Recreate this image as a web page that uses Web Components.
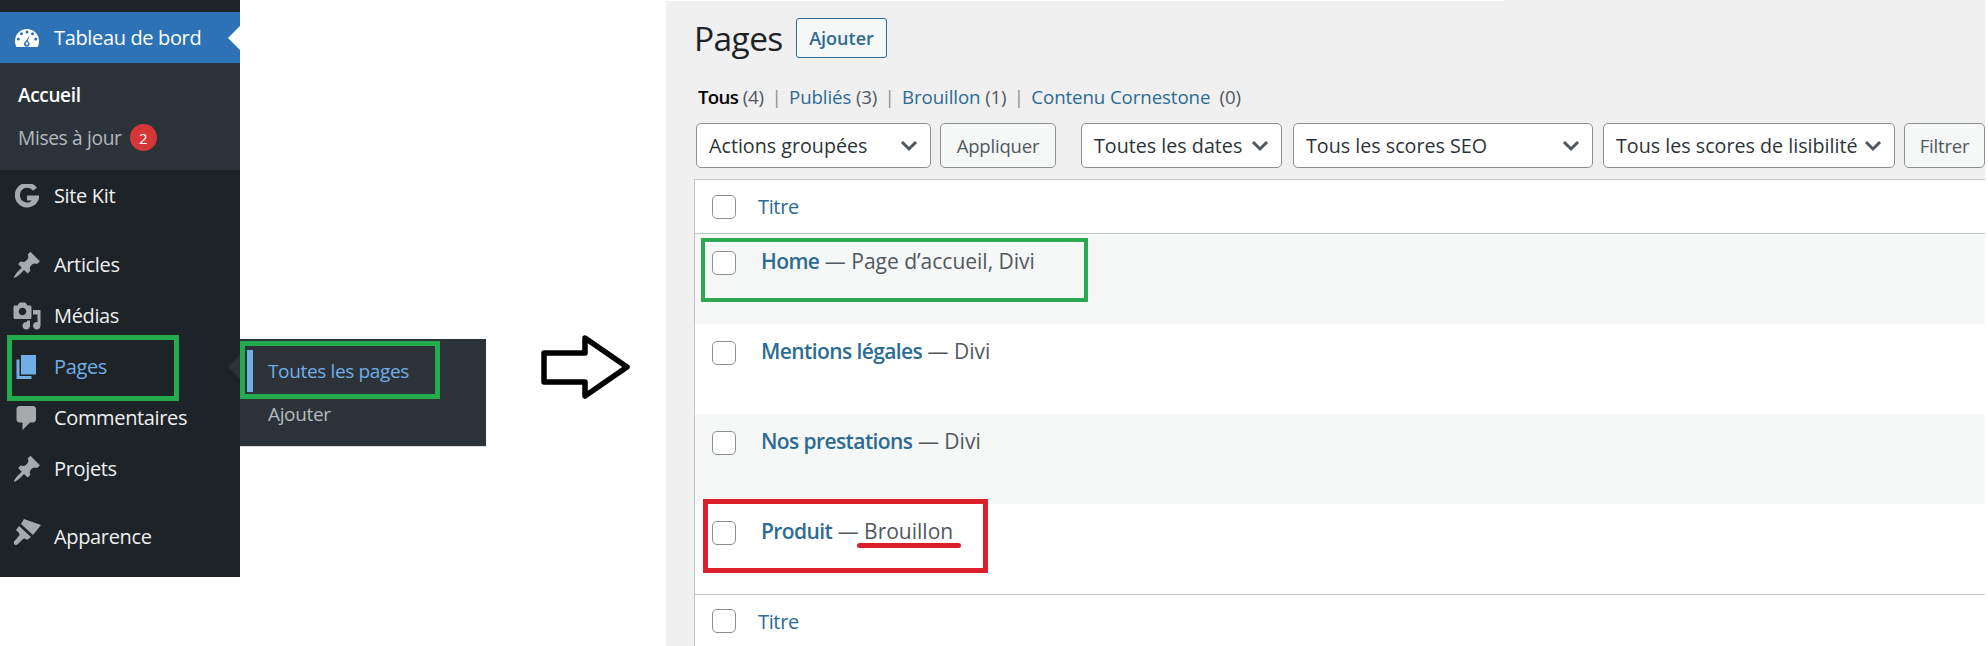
<!DOCTYPE html>
<html lang="fr">
<head>
<meta charset="utf-8">
<title>Pages</title>
<style>
  html, body { margin: 0; padding: 0; background: #fff; }
  body {
    width: 1988px; height: 646px; overflow: hidden; position: relative;
    font-family: "Open Sans", "Noto Sans", sans-serif; letter-spacing: -.35px;
  }
  #page { display: flex; align-items: flex-start; height: 646px; }
</style>
</head>
<body>
<div id="page">
  <admin-menu>
    <menu-item icon="gauge" state="current" label="Tableau de bord"></menu-item>
    <sub-menu>
      <sub-link strong>Accueil</sub-link>
      <sub-link badge="2">Mises à jour</sub-link>
    </sub-menu>
    <menu-item icon="google" label="Site Kit"></menu-item>
    <menu-item icon="pin" label="Articles" gap="18"></menu-item>
    <menu-item icon="media" label="Médias"></menu-item>
    <menu-item icon="page" state="open" label="Pages"></menu-item>
    <menu-item icon="comment" label="Commentaires"></menu-item>
    <menu-item icon="pin" label="Projets"></menu-item>
    <menu-item icon="brush" label="Apparence" gap="17"></menu-item>
    <fly-out slot="overlay">
      <fly-link active>Toutes les pages</fly-link>
      <fly-link>Ajouter</fly-link>
    </fly-out>
  </admin-menu>
  <big-arrow></big-arrow>
  <pages-screen>
    <page-row checked-state="alt" name="Home" meta="Page d’accueil, Divi"></page-row>
    <page-row name="Mentions légales" meta="Divi"></page-row>
    <page-row checked-state="alt" name="Nos prestations" meta="Divi"></page-row>
    <page-row name="Produit" meta="Brouillon"></page-row>
  </pages-screen>
</div>

<!-- les cadres dessines par dessus la capture -->
<mark-box x="7" y="335" w="172" h="66" color="#22ac4d" size="5"></mark-box>
<mark-box x="240" y="341" w="200" h="58" color="#22ac4d" size="5"></mark-box>
<mark-box x="701" y="238" w="387" h="64" color="#2ca853" size="4"></mark-box>
<mark-box x="703" y="499" w="285" h="74" color="#dd1f2c" size="5"></mark-box>
<mark-box x="857" y="543" w="104" h="5" color="#dd1f2c" fill></mark-box>

<script>
const icons = {
  gauge: `<svg width="24" height="18" viewBox="0 0 24 18"><path fill="currentColor" d="M12 0C5.4 0 0 5.4 0 12c0 2.2.5 4.2 1.5 6h21c1-1.8 1.5-3.8 1.500-6C24 5.400 18.600 0 12 0z"/><g fill="#2c72b4"><circle cx="12" cy="3" r="1.500"/><circle cx="6.500" cy="4.800" r="1.500"/><circle cx="17.500" cy="4.800" r="1.500"/><circle cx="3.300" cy="10" r="1.500"/><circle cx="20.700" cy="10" r="1.500"/><path d="M14.700 6l-2 6.200a2.800 2.800 0 1 1-2 .1z"/></g><circle cx="12" cy="14.600" r="1.300" fill="#fff"/></svg>`,
  google: `<svg width="24" height="24" viewBox="0 0 24 24"><path fill="none" stroke="currentColor" stroke-width="5" d="M20 5.300A9.800 9.800 0 1 0 21.500 14H12"/></svg>`,
  pin: `<svg width="30" height="30" viewBox="0 0 20 20"><path fill="currentColor" d="M10.440 3.020l1.820-1.820 6.360 6.350-1.830 1.820c-1.050-.68-2.480-.57-3.410.36l-.75.75c-.92.930-1.040 2.350-.35 3.410l-1.830 1.820-2.410-2.410-2.800 2.790c-.42.42-3.380 2.710-3.800 2.290s1.860-3.390 2.280-3.810l2.790-2.790L4.100 9.360l1.830-1.820c1.050.69 2.480.57 3.400-.36l.75-.75c.93-.92 1.050-2.350.36-3.410z"/></svg>`,
  media: `<svg width="30" height="30" viewBox="0 0 20 20"><path fill="currentColor" d="M13 11V4c0-.55-.45-1-1-1h-1.670L9 1H5L3.670 3H2c-.55 0-1 .45-1 1v7c0 .55.45 1 1 1h10c.55 0 1-.45 1-1zM7 4.500c1.380 0 2.500 1.120 2.500 2.500S8.380 9.500 7 9.500 4.500 8.380 4.500 7 5.620 4.500 7 4.500zM14 6h5v10.500c0 1.380-1.120 2.500-2.500 2.500S14 17.880 14 16.500s1.120-2.500 2.500-2.500c.17 0 .34.02.5.05V9h-3V6zm-4 8.050V13h2v3.500c0 1.380-1.120 2.500-2.500 2.500S7 17.880 7 16.500 8.120 14 9.500 14c.17 0 .34.02.5.05z"/></svg>`,
  page: `<svg width="30" height="30" viewBox="0 0 20 20"><path fill="currentColor" d="M6 15V2h10v13H6zm-1 1h8v2H3V5h2v11z"/></svg>`,
  comment: `<svg width="30" height="30" viewBox="0 0 20 20"><path fill="currentColor" d="M5 2h9c1.100 0 2 .9 2 2v7c0 1.100-.9 2-2 2h-2l-5 5v-5H5c-1.100 0-2-.9-2-2V4c0-1.100.9-2 2-2z"/></svg>`,
  brush: `<svg width="30" height="30" viewBox="0 6 30 30" style="overflow:visible"><path fill="currentColor" d="M12 3l17 6-8 10L9 8zM7 10l12 11-4 3c-2-2-3-2-5 0l-4 4c-2 2-5 1-4-2.500l4-4.500c2-2 2-3 0-5l-2-2z"/></svg>`
}

// petite aide pour ne pas repeter attachShadow partout
class Base extends HTMLElement {
  render(html) {
    if (!this.shadowRoot) this.attachShadow({ mode: "open" })
    this.shadowRoot.innerHTML = html
  }
  connectedCallback() { this.draw() }
}

class AdminMenu extends Base {
  draw() {
    this.render(`<style>
      :host { display: block; position: relative; flex: 0 0 240px; width: 240px; height: 577px;
        padding-top: 12px; box-sizing: border-box; background: #1d2327; }
    </style><slot></slot><slot name="overlay"></slot>`)
  }
}

class MenuItem extends Base {
  draw() {
    const state = this.getAttribute("state") || ""
    const gap = this.getAttribute("gap") || 0
    this.render(`<style>
      :host { display: flex; position: relative; align-items: center; height: 51px;
        margin-top: ${gap}px; color: #f0f0f1; font-size: 20px; }
      :host([state=current]) { background: #2c72b4; color: #fff; height: 51px; }
      :host([state=open]) .label, :host([state=open]) .ico { color: #72aee6; }
      .ico { flex: 0 0 54px; display: flex; justify-content: center; box-sizing: border-box;
        padding-right: 0; color: #a7aaad; width: 54px; }
      :host([state=current]) .ico { color: #fff; }
      svg { display: block; }
      .notch { position: absolute; right: 0; top: 50%; margin-top: -12px; width: 0; height: 0;
        border: 12px solid transparent; border-left: 0; }
      :host([state=current]) .notch { border-right-color: #fff; }
      :host([state=open]) .notch { border-right-color: #2c3338; }
    </style>
    <span class="ico">${icons[this.getAttribute("icon")]}</span>
    <span class="label">${this.getAttribute("label")}</span>
    ${state ? '<span class="notch"></span>' : ""}`)
  }
}

class SubMenu extends Base {
  draw() {
    this.render(`<style>
      :host { display: flex; flex-direction: column; height: 107px; box-sizing: border-box;
        padding-top: 10px; background: #2c3338; }
    </style><slot></slot>`)
  }
}

class SubLink extends Base {
  draw() {
    const badge = this.getAttribute("badge")
    this.render(`<style>
      :host { display: flex; align-items: center; height: 43px; padding-left: 18px;
        font-size: 19.200px; color: #b4b9be; }
      :host([strong]) { color: #fff; font-weight: 600; font-size: 19px; }
      .badge { margin-left: 8px; width: 27px; height: 27px; border-radius: 50%; background: #d63638;
        color: #fff; font-size: 15px; display: flex; align-items: center; justify-content: center; }
    </style><slot></slot>${badge ? `<span class="badge">${badge}</span>` : ""}`)
  }
}

class FlyOut extends Base {
  draw() {
    this.render(`<style>
      :host { position: absolute; left: 240px; top: 339px; width: 246px; height: 107px;
        box-sizing: border-box; padding-top: 11px; background: #2c3338; box-shadow: 0 1px 0 #ddd; }
    </style><slot></slot>`)
  }
}

class FlyLink extends Base {
  draw() {
    this.render(`<style>
      :host { display: flex; position: relative; align-items: center; height: 42px; padding-left: 28px;
        margin-bottom: 1px; font-size: 19px; color: #b4b9be; }
      :host([active]) { color: #72aee6; }
      .bar { position: absolute; left: 7px; top: 0; bottom: 0; width: 6px; background: #72aee6; }
    </style>${this.hasAttribute("active") ? '<span class="bar"></span>' : ""}<slot></slot>`)
  }
}

class BigArrow extends Base {
  draw() {
    this.render(`<style>
      :host { display: block; flex: 0 0 426px; width: 426px; height: 646px; }
      svg { display: block; margin: 335px 0 0 301px; }
    </style>
    <svg width="95" height="70" viewBox="0 0 95 70"><path fill="#fff" stroke="#000" stroke-width="5.500" stroke-linejoin="round" d="M3 18h41V3l42 29-42 29V47H3z"/></svg>`)
  }
}

class WpCheck extends Base {
  draw() {
    this.render(`<style>
      :host { display: block; width: 24px; height: 24px; box-sizing: border-box; flex: none;
        border: 1px solid #8c8f94; border-radius: 5px; background: #fff; }
    </style>`)
  }
}

class WpSelect extends Base {
  draw() {
    this.render(`<style>
      :host { display: flex; align-items: center; justify-content: space-between; box-sizing: border-box;
        height: 45px; padding: 0 12px 0 12px; background: #fff; border: 1px solid #8c8f94; border-radius: 5px;
        font-size: 19.700px; letter-spacing: 0; color: #2c3338; white-space: nowrap; }
      svg { flex: none; display: block; }
    </style><slot></slot>
    <svg width="18" height="12" viewBox="0 0 18 12"><path fill="none" stroke="#50575e" stroke-width="3" d="M2 2l7 7 7-7"/></svg>`)
  }
}

class WpButton extends Base {
  draw() {
    this.render(`<style>
      :host { display: flex; align-items: center; justify-content: center; box-sizing: border-box; height: 45px;
        background: #f6f7f7; border: 1px solid #8c8f94; border-radius: 5px; font-size: 18.500px; letter-spacing: -.2px; color: #50575e; }
      :host([primary]) { height: 40px; border-color: #2c6b94; border-radius: 3px; color: #2c6b94; font-weight: 600; font-size: 18px; letter-spacing: 0; }
    </style><slot></slot>`)
  }
}

class PageRow extends Base {
  draw() {
    const alt = this.hasAttribute("checked-state")
    this.render(`<style>
      :host { display: flex; box-sizing: border-box; height: 90px; padding: 17px 0 0 17px;
        background: ${alt ? "#f6f7f7" : "#fff"}; }
      .txt { margin: -6px 0 0 25px; font-size: 21px; line-height: 32px; color: #50575e; letter-spacing: 0; }
      b { font-weight: 600; color: #2c6b94; letter-spacing: -.6px; }
    </style>
    <wp-check></wp-check>
    <div class="txt"><b>${this.getAttribute("name")}</b> — ${this.getAttribute("meta")}</div>`)
  }
}

class PagesScreen extends Base {
  draw() {
    this.render(`<style>
      :host { display: block; flex: 0 0 1319px; width: 1319px; height: 646px; overflow: hidden;
        box-sizing: border-box; padding-left: 30px; background: #f0f0f1; }
      .strip { height: 1px; width: 838px; margin-left: -30px; background: #fff; }
      .head { display: flex; align-items: center; margin-top: 17px; height: 40px; }
      h1 { margin: 0 0 0 -2px; width: 102px; font-size: 33.500px; font-weight: 400; color: #1d2327; letter-spacing: -.6px; }
      .head wp-button { width: 91px; }
      .views { display: flex; align-items: center; height: 26px; margin: 25px 0 0 2px;
        font-size: 18.700px; color: #50575e; letter-spacing: -.2px; white-space: pre; }
      .views b { font-weight: 600; color: #000; letter-spacing: -.7px; }
      .views a { color: #2c6b94; letter-spacing: -.1px; }
      .views i { font-style: normal; color: #8c8f94; margin: 0 7.500px; }
      .tools { display: flex; margin-top: 14px; }
      .tbl { margin: 11px 0 0 -2px; border-left: 1px solid #c3c4c7; border-top: 1px solid #c3c4c7; background: #fff; }
      .hd { display: flex; align-items: center; box-sizing: border-box; height: 54px; padding-left: 17px;
        border-bottom: 1px solid #c3c4c7; font-size: 20px; color: #2c6b94; }
      .hd span { margin-left: 22px; }
      .ft { border-bottom: 0; border-top: 1px solid #c3c4c7; height: 53px; padding-top: 0; }
    </style>
    <div class="strip"></div>
    <div class="head"><h1>Pages</h1><wp-button primary>Ajouter</wp-button></div>
    <div class="views"><b>Tous</b> (4)<i>|</i><a>Publiés</a> (3)<i>|</i><a>Brouillon</a> (1)<i>|</i><a>Contenu Cornestone</a>  (0)</div>
    <div class="tools">
      <wp-select style="width:235px">Actions groupées</wp-select>
      <wp-button style="width:116px;margin-left:9px">Appliquer</wp-button>
      <wp-select style="width:201px;margin-left:25px">Toutes les dates</wp-select>
      <wp-select style="width:300px;margin-left:11px">Tous les scores SEO</wp-select>
      <wp-select style="width:292px;margin-left:10px">Tous les scores de lisibilité</wp-select>
      <wp-button style="width:81px;margin-left:9px">Filtrer</wp-button>
    </div>
    <div class="tbl">
      <div class="hd"><wp-check></wp-check><span>Titre</span></div>
      <slot></slot>
      <div class="hd ft"><wp-check></wp-check><span>Titre</span></div>
    </div>`)
  }
}

class MarkBox extends Base {
  draw() {
    const a = n => this.getAttribute(n)
    const filled = this.hasAttribute("fill")
    this.render(`<style>
      :host { position: absolute; box-sizing: border-box; left: ${a("x")}px; top: ${a("y")}px; width: ${a("w")}px; height: ${a("h")}px;
        ${filled ? `background: ${a("color")}; border-radius: 3px;` : `border: ${a("size")}px solid ${a("color")};`} }
    </style>`)
  }
}

customElements.define("wp-check", WpCheck)
customElements.define("wp-select", WpSelect)
customElements.define("wp-button", WpButton)
customElements.define("page-row", PageRow)
customElements.define("pages-screen", PagesScreen)
customElements.define("admin-menu", AdminMenu)
customElements.define("menu-item", MenuItem)
customElements.define("sub-menu", SubMenu)
customElements.define("sub-link", SubLink)
customElements.define("fly-out", FlyOut)
customElements.define("fly-link", FlyLink)
customElements.define("big-arrow", BigArrow)
customElements.define("mark-box", MarkBox)
</script>
</body>
</html>
